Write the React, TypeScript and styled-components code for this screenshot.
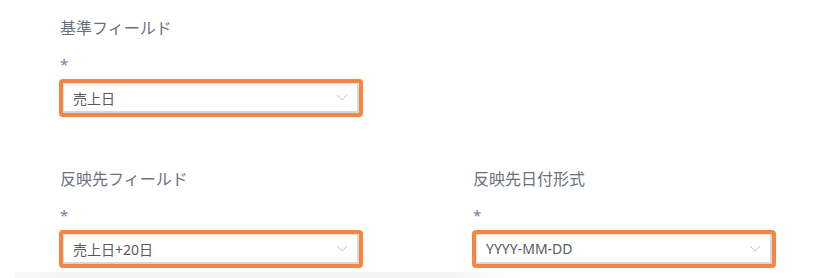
import React from "react";
import styled, { createGlobalStyle } from "styled-components";

const GlobalStyle = createGlobalStyle`
  html, body {
    margin: 0;
    padding: 0;
    background: #ffffff;
    font-family: "Noto Sans", "Noto Sans CJK JP", sans-serif;
  }
`;

const Page = styled.div`
  width: 835px;
  height: 278px;
  overflow: hidden;
  padding-top: 16px;
  box-sizing: border-box;
  display: flex;
  flex-direction: column;
`;

const Grid = styled.div`
  display: grid;
  grid-template-columns: 304px 304px;
  column-gap: 109px;
  row-gap: 50px;
  padding-left: 59px;
`;

const Field = styled.div<{ $col: number }>`
  grid-column: ${(p) => p.$col};
  display: flex;
  flex-direction: column;
`;

const Label = styled.div`
  font-size: 16px;
  line-height: 24px;
  color: #6a7180;
  padding-left: 1px;
`;

const Required = styled.div`
  margin-top: 13px;
  font-size: 15px;
  line-height: 23px;
  height: 20px;
  color: #7583a0;
  padding-left: 1px;
`;

const Highlight = styled.div`
  margin-top: 6px;
  border: 4px solid #f58540;
  border-radius: 4px;
  background: #f58540;
`;

const Select = styled.div`
  height: 30px;
  box-sizing: border-box;
  background: #ffffff;
  border: 1px solid #e2e2e2;
  border-bottom: 2px solid #d6d6d6;
  border-right: 2px solid #dadada;
  display: flex;
  align-items: center;
  justify-content: space-between;
  padding: 0 9px 0 9px;
  font-size: 14px;
  color: #555a60;
`;

const Chevron = () => (
  <svg width="12" height="7" viewBox="0 0 12 7" fill="none">
    <polyline points="1,1 6,6 11,1" stroke="#c4c7cc" strokeWidth="1" />
  </svg>
);

const Footer = styled.div`
  margin-top: auto;
  margin-left: 15px;
  width: 506px;
  height: 6px;
  background: linear-gradient(90deg, rgba(240,240,240,0.4), #f3f3f3 10%, #f3f3f3 85%, rgba(240,240,240,0));
`;

const SelectField = ({ col, label, value }: { col: number; label: string; value: string }) => (
  <Field $col={col}>
    <Label>{label}</Label>
    <Required>*</Required>
    <Highlight>
      <Select>
        <span>{value}</span>
        <Chevron />
      </Select>
    </Highlight>
  </Field>
);

export default function App() {
  return (
    <Page>
      <GlobalStyle />
      <Grid>
        <SelectField col={1} label="基準フィールド" value="売上日" />
        <SelectField col={1} label="反映先フィールド" value="売上日+20日" />
        <SelectField col={2} label="反映先日付形式" value="YYYY-MM-DD" />
      </Grid>
      <Footer />
    </Page>
  );
}
